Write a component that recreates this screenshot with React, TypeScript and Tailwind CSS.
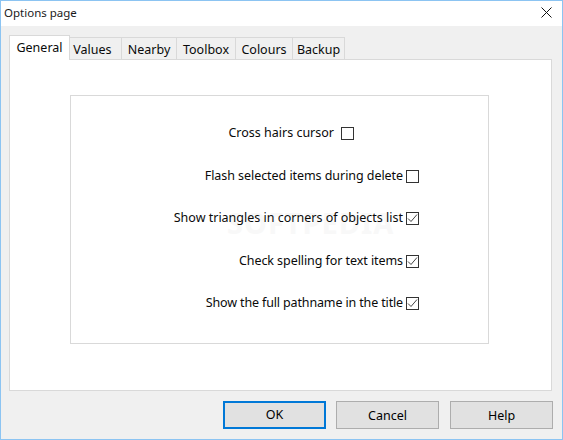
import React from "react";

const tabs = [
  { label: "Values", w: "w-[52px] pr-[6px] pt-[3px]" },
  { label: "Nearby", w: "w-[55px] pt-[3px]" },
  { label: "Toolbox", w: "w-[59px] pt-[3px]" },
  { label: "Colours", w: "w-[57px] pt-[3px]" },
  { label: "Backup", w: "w-[52px] pt-[3px]" },
];

function Box({ checked }: { checked?: boolean }) {
  return (
    <span className="flex h-[13px] w-[13px] shrink-0 items-center justify-center border border-[#333333] bg-white">
      {checked && (
        <svg width="11" height="11" viewBox="0 0 11 11" fill="none" stroke="#444444" strokeWidth="1">
          <path d="M1 5.5 L4 8.5 L10 1.5" />
        </svg>
      )}
    </span>
  );
}

function Row({ label, checked, first, tracking }: { label: string; checked?: boolean; first?: boolean; tracking?: string }) {
  return (
    <div className={first ? "mr-[65px] flex h-[13px] items-center justify-end gap-[7px]" : "flex h-[13px] items-center justify-end gap-[3px]"}>
      <span className={`whitespace-nowrap ${tracking ?? ""}`}>{label}</span>
      <Box checked={checked} />
    </div>
  );
}

function Btn({ label, primary }: { label: string; primary?: boolean }) {
  return (
    <button
      className={
        primary
          ? "h-[28px] w-[103px] border-2 border-[#0078d7] bg-[#e1e1e1] pt-px text-[12.5px] text-black"
          : "h-[28px] w-[103px] border border-[#adadad] bg-[#e1e1e1] pt-[2px] text-[12.5px] text-black"
      }
    >
      {label}
    </button>
  );
}

export default function App() {
  return (
    <div className="flex h-[440px] w-[563px] flex-col border border-[#8cc4f2] bg-[#f0f0f0] font-['Noto_Sans','Open_Sans',sans-serif] text-[12.5px] text-[#0a0a0a]">
      <div className="flex h-[25px] shrink-0 items-center justify-between bg-white pb-[2px] pl-[3px] pr-[10px]">
        <span className="text-[11.5px] text-[#1a1a1a]">Options page</span>
        <svg width="11" height="11" viewBox="0 0 11 11" stroke="#111111" strokeWidth="1" fill="none">
          <path d="M0.5 0.5 L10.5 10.5 M10.5 0.5 L0.5 10.5" />
        </svg>
      </div>
      <div className="flex min-h-0 flex-1 flex-col pl-[8px] pr-[10px]">
        <div className="mt-[9px] flex h-[24px] shrink-0 items-end">
          <div className="relative z-10 -mb-px flex h-[25px] w-[61px] items-center justify-center border border-b-0 border-[#d9d9d9] bg-white">
            General
          </div>
          {tabs.map((t) => (
            <div
              key={t.label}
              className={`flex h-[22px] items-center justify-center border border-l-0 border-b-0 border-[#d9d9d9] bg-[#f0f0f0] ${t.w}`}
            >
              {t.label}
            </div>
          ))}
        </div>
        <div className="relative flex h-[332px] shrink-0 flex-col border border-[#d9d9d9] bg-white pl-[60px] pr-[62px] pt-[35px]">
          <span className="pointer-events-none absolute left-[217px] top-[148px] text-[29px] font-bold leading-none tracking-[1px] text-[#f8f8f8]">
            SOFTPEDIA
          </span>
          <div className="relative flex h-[249px] flex-col gap-[29.5px] border border-[#d9d9d9] pl-[60px] pr-[69px] pt-[31px]">
            <Row first label="Cross hairs cursor" />
            <Row label="Flash selected items during delete" tracking="tracking-[-0.06px]" />
            <Row checked label="Show triangles in corners of objects list" />
            <Row checked label="Check spelling for text items" tracking="tracking-[-0.07px]" />
            <Row checked label="Show the full pathname in the title" tracking="tracking-[-0.14px]" />
          </div>
        </div>
        <div className="-mr-px mt-[10px] flex justify-end gap-[10px]">
          <Btn primary label="OK" />
          <div className="mr-px">
            <Btn label="Cancel" />
          </div>
          <Btn label="Help" />
        </div>
      </div>
    </div>
  );
}
